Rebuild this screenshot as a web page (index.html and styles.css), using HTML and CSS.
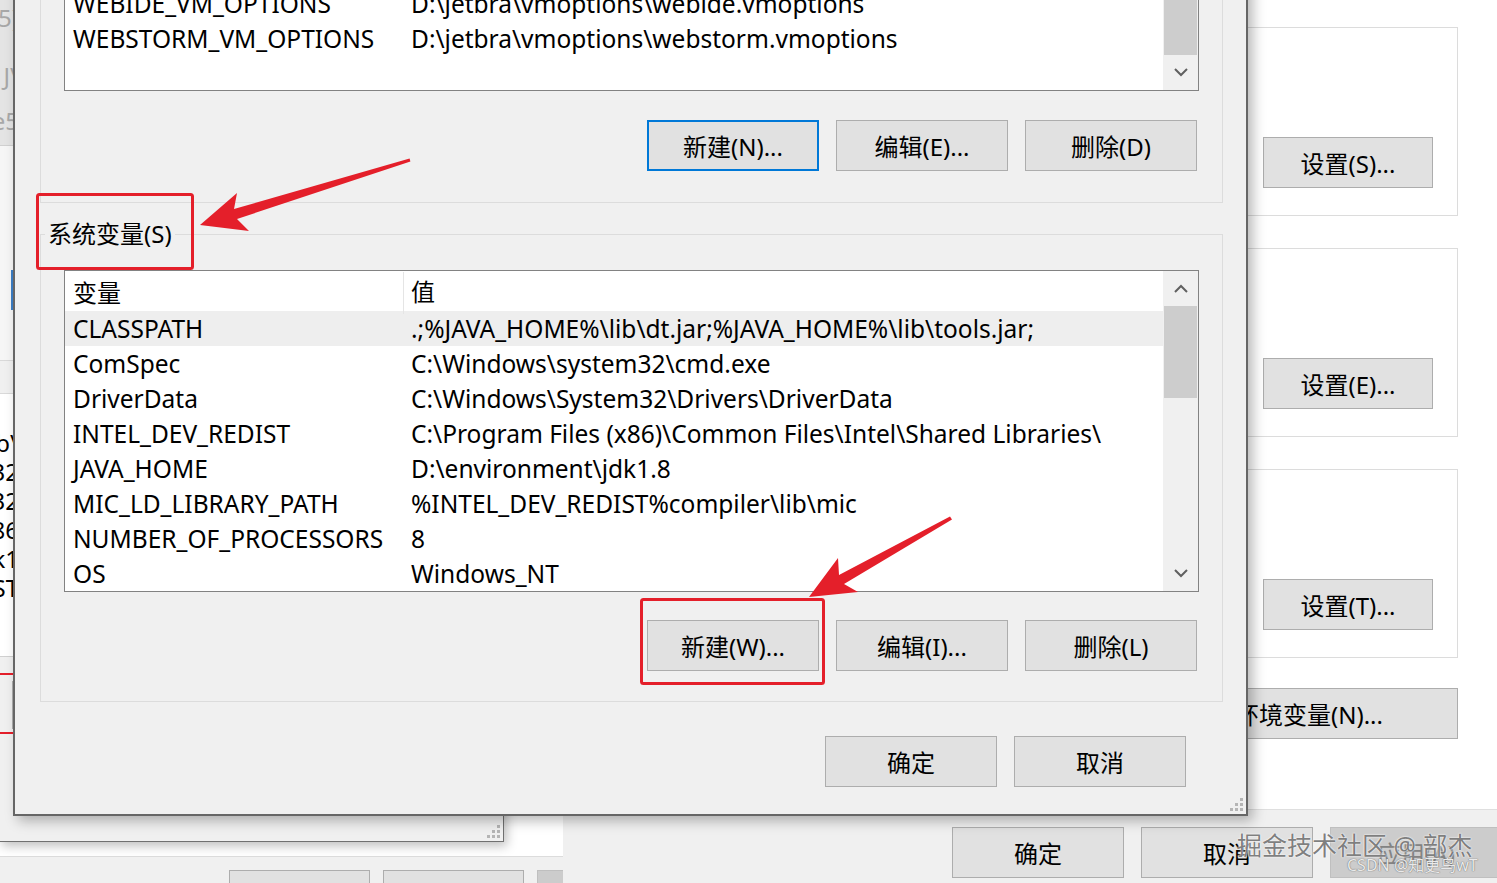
FILE: index.html
```html
<!DOCTYPE html>
<html lang="zh-CN">
<head>
  <meta charset="UTF-8" />
  <title>编辑环境变量</title>
  <link rel="stylesheet" href="styles.css">
</head>
<body>

<div class="desk">

  <!-- window far behind, left -->
  <div class="win win-left">
    <div class="left-body"></div>
    <div class="left-bar">
      <span class="btn btn-sm"></span>
      <span class="btn btn-sm"></span>
      <span class="btn btn-sm off"></span>
    </div>
  </div>

  <!-- 系统属性 -->
  <div class="win win-sys">
    <div class="sys-body">
      <div class="sys-group"><span class="btn btn-sys">设置(S)...</span></div>
      <div class="sys-group"><span class="btn btn-sys">设置(E)...</span></div>
      <div class="sys-group"><span class="btn btn-sys">设置(T)...</span></div>
      <span class="btn btn-wide">环境变量(N)...</span>
    </div>
    <div class="sys-bar">
      <span class="btn">确定</span>
      <span class="btn">取消</span>
      <span class="btn off">应用(A)</span>
    </div>
  </div>

  <!-- 环境变量 -->
  <div class="win win-env">
    <div class="env-strip">
      <div class="es-top">
        <div class="frag" style="height:72px">25)</div>
        <div class="frag" style="height:44px">J\</div>
        <div class="frag" style="height:46px">Ie5</div>
      </div>
      <div class="es-mid"><span class="es-blue"></span></div>
      <div class="es-bar"></div>
      <div class="es-list">
        <div class="frag">lib\</div>
        <div class="frag">m32</div>
        <div class="frag">m32</div>
        <div class="frag">x86</div>
        <div class="frag">jdk1</div>
        <div class="frag">IST</div>
      </div>
      <div class="es-foot">
        <div class="es-red"><span class="es-edge"></span></div>
      </div>
    </div>
    <svg class="grip" width="13" height="13" viewBox="0 0 13 13"><rect x="10" y="0" width="3" height="3"/><rect x="5" y="5" width="3" height="3"/><rect x="10" y="5" width="3" height="3"/><rect x="0" y="10" width="3" height="3"/><rect x="5" y="10" width="3" height="3"/><rect x="10" y="10" width="3" height="3"/></svg>
  </div>

  <!-- 编辑环境变量 dialog -->
  <div class="win dialog">
    <div class="group">
      <div class="list list-user">
        <div class="list-rows">
          <div class="row"><span>USERDOMAIN_ROAMINGPROFILE</span><span>DESKTOP</span></div>
          <div class="row"><span>WEBIDE_VM_OPTIONS</span><span>D:\jetbra\vmoptions\webide.vmoptions</span></div>
          <div class="row"><span>WEBSTORM_VM_OPTIONS</span><span>D:\jetbra\vmoptions\webstorm.vmoptions</span></div>
        </div>
        <div class="scroll">
          <div class="sb-btn"><svg width="14" height="9" viewBox="0 0 14 9"><polyline points="1,8 7,2 13,8"/></svg></div>
          <div class="sb-thumb"></div>
          <div class="sb-track"></div>
          <div class="sb-btn"><svg width="14" height="9" viewBox="0 0 14 9"><polyline points="1,1 7,7 13,1"/></svg></div>
        </div>
      </div>
      <div class="btn-row">
        <span class="btn focus">新建(N)...</span>
        <span class="btn">编辑(E)...</span>
        <span class="btn">删除(D)</span>
      </div>
    </div>

    <fieldset class="group group-sys">
      <legend>系统变量(S)</legend>
      <div class="list list-sys">
        <div class="list-rows">
          <div class="row head"><span>变量</span><span>值</span></div>
          <div class="row sel"><span>CLASSPATH</span><span>.;%JAVA_HOME%\lib\dt.jar;%JAVA_HOME%\lib\tools.jar;</span></div>
          <div class="row"><span>ComSpec</span><span>C:\Windows\system32\cmd.exe</span></div>
          <div class="row"><span>DriverData</span><span>C:\Windows\System32\Drivers\DriverData</span></div>
          <div class="row"><span>INTEL_DEV_REDIST</span><span>C:\Program Files (x86)\Common Files\Intel\Shared Libraries\</span></div>
          <div class="row"><span>JAVA_HOME</span><span>D:\environment\jdk1.8</span></div>
          <div class="row"><span>MIC_LD_LIBRARY_PATH</span><span>%INTEL_DEV_REDIST%compiler\lib\mic</span></div>
          <div class="row"><span>NUMBER_OF_PROCESSORS</span><span>8</span></div>
          <div class="row"><span>OS</span><span>Windows_NT</span></div>
        </div>
        <div class="scroll">
          <div class="sb-btn"><svg width="14" height="9" viewBox="0 0 14 9"><polyline points="1,8 7,2 13,8"/></svg></div>
          <div class="sb-thumb"></div>
          <div class="sb-track"></div>
          <div class="sb-btn"><svg width="14" height="9" viewBox="0 0 14 9"><polyline points="1,1 7,7 13,1"/></svg></div>
        </div>
      </div>
      <div class="btn-row">
        <span class="btn">新建(W)...</span>
        <span class="btn">编辑(I)...</span>
        <span class="btn">删除(L)</span>
      </div>
    </fieldset>

    <div class="dlg-actions">
      <span class="btn">确定</span>
      <span class="btn">取消</span>
    </div>

    <svg class="grip" width="13" height="13" viewBox="0 0 13 13"><rect x="10" y="0" width="3" height="3"/><rect x="5" y="5" width="3" height="3"/><rect x="10" y="5" width="3" height="3"/><rect x="0" y="10" width="3" height="3"/><rect x="5" y="10" width="3" height="3"/><rect x="10" y="10" width="3" height="3"/></svg>
  </div>

  <!-- red annotations -->
  <svg class="marks" width="1497" height="883" viewBox="0 0 1497 883">
    <rect x="37.5" y="194.5" width="155" height="74" rx="2"/>
    <rect x="641.5" y="599.5" width="182" height="84" rx="2"/>
    <polygon points="200,225 237,193 234,209 409.6,158.6 410.4,161.4 237,219 249,231"/>
    <polygon points="809,597 838,558 839,575 950,516.5 952,519.5 844,584 858,592"/>
  </svg>

  <div class="wm">掘金技术社区 @ 部杰</div>
  <div class="wm-csdn">CSDN @知更鸟wT</div>
</div>

</body>
</html>
```

FILE: styles.css
```css
* {
  box-sizing: border-box;
}
body {
  margin: 0;
  width: 1497px;
  height: 883px;
  overflow: hidden;
  background: #f0f0f0;
  font-family: "Noto Sans", "Noto Sans CJK SC", sans-serif;
  font-size: 24px;
  color: #000;
}

.desk {
  position: relative;
  width: 1497px;
  height: 883px;
  overflow: hidden;
}
.win {
  position: absolute;
}

.btn {
  width: 172px;
  height: 51px;
  flex: none;
  display: flex;
  align-items: center;
  justify-content: center;
  background: #e1e1e1;
  border: 1px solid #adadad;
  white-space: nowrap;
}
.btn.focus {
  border: 2px solid #0078d7;
}
.btn.off {
  background: #cccccc;
  border-color: #bfbfbf;
  color: #838383;
}

/* left window */
.win-left {
  left: 0;
  top: 0;
  width: 564px;
  height: 883px;
  background: #fff;
  border-right: 1px solid #a0a0a0;
  display: flex;
  flex-direction: column;
}
.left-body {
  flex: 1;
}
.left-bar {
  height: 27px;
  background: #f0f0f0;
  border-top: 1px solid #dcdcdc;
  display: flex;
  gap: 13px;
  padding: 13px 0 0 229px;
  overflow: hidden;
}
.btn-sm {
  width: 141px;
}

/* system properties */
.win-sys {
  left: 563px;
  top: 0;
  right: 0;
  bottom: 0;
  background: #fff;
  display: flex;
  flex-direction: column;
}
.sys-body {
  height: 809px;
  padding: 27px 39px 0 34px;
  display: flex;
  flex-direction: column;
}
.sys-group {
  height: 189px;
  border: 1px solid #dcdcdc;
  display: flex;
  justify-content: flex-end;
  align-items: flex-end;
  padding: 0 24px 27px 0;
}
.sys-group + .sys-group {
  margin-top: 32px;
}
.btn-sys {
  width: 170px;
}
.btn-wide {
  width: 298px;
  margin-top: 30px;
  align-self: flex-end;
}
.sys-bar {
  flex: 1;
  background: #f0f0f0;
  border-top: 1px solid #dfdfdf;
  display: flex;
  gap: 17px;
  padding: 17px 0 0 389px;
}

/* env window behind the dialog */
.win-env {
  left: -1px;
  top: -20px;
  width: 505px;
  height: 862px;
  background: #f0f0f0;
  border: 1px solid #707070;
  box-shadow: 3px 4px 10px rgba(0,0,0,0.25);
}
.env-strip {
  width: 19px;
  display: flex;
  flex-direction: column;
  overflow: hidden;
}
.frag {
  display: flex;
  justify-content: flex-end;
  align-items: center;
  white-space: nowrap;
  height: 29px;
}
.es-top {
  height: 164px;
  background: #e4e4e4;
  color: #a8a8a8;
}
.es-mid {
  height: 215px;
  background: #f6f6f6;
  border-top: 1px solid #d0d0d0;
  padding: 124px 0 0 11px;
}
.es-blue {
  display: block;
  width: 3px;
  height: 40px;
  background: #3c7fc7;
}
.es-bar {
  height: 34px;
  border-top: 1px solid #d9d9d9;
  border-bottom: 1px solid #d9d9d9;
}
.es-list {
  height: 262px;
  background: #fff;
  padding-top: 34px;
}
.es-foot {
  border-top: 1px solid #d0d0d0;
  padding-top: 16px;
}
.es-red {
  height: 61px;
  border-top: 2px solid #e41f2a;
  border-bottom: 2px solid #e41f2a;
  padding: 6px 0 0 12px;
}
.es-edge {
  display: block;
  height: 48px;
  border-left: 1px solid #adadad;
}

.grip {
  position: absolute;
  right: 3px;
  bottom: 3px;
  fill: #b5b5b5;
}

/* main dialog */
.dialog {
  left: 13px;
  top: -60px;
  width: 1235px;
  height: 876px;
  background: #f0f0f0;
  border: 2px solid #666;
  box-shadow: 5px 5px 12px rgba(0,0,0,0.28);
  padding: 0 23px 0 25px;
}
.group {
  border: 1px solid #dcdcdc;
  padding: 7px 23px 31px;
}
.group-sys {
  margin: 16px 0 0;
  padding: 21px 23px 30px;
  min-width: 0;
}
.group-sys legend {
  padding: 0 3px;
  margin-left: -19px;
  line-height: 30px;
}

.list {
  display: flex;
  background: #fff;
  border: 1px solid #828282;
}
.list-user {
  height: 141px;
}
.list-sys {
  height: 322px;
}
.list-rows {
  flex: 1;
  overflow: hidden;
}
.row {
  display: grid;
  grid-template-columns: 339px 1fr;
  height: 35px;
  line-height: 35px;
  font-size: 24.5px;
  white-space: nowrap;
}
.row span:first-child {
  padding-left: 8px;
}
.row span + span {
  padding-left: 7px;
}
.row.head {
  height: 40px;
  line-height: 42px;
  font-size: 24px;
}
.row.head span:first-child {
  border-right: 1px solid #e5e5e5;
  margin: 1px 0;
}
.row.sel {
  background: #eeeeee;
}

.scroll {
  width: 35px;
  background: #f0f0f0;
  display: flex;
  flex-direction: column;
}
.sb-btn {
  height: 35px;
  flex: none;
  display: flex;
  align-items: center;
  justify-content: center;
}
.sb-btn svg {
  fill: none;
  stroke: #606060;
  stroke-width: 2;
}
.sb-thumb {
  margin: 0 1px;
  background: #cdcdcd;
  flex: none;
}
.list-user .sb-thumb {
  height: 69px;
}
.list-sys .sb-thumb {
  height: 92px;
}
.sb-track {
  flex: 1;
}

.btn-row {
  display: flex;
  justify-content: flex-end;
  gap: 17px;
  margin-top: 29px;
  padding-right: 2px;
}
.group-sys .btn-row {
  margin-top: 28px;
}
.dlg-actions {
  display: flex;
  justify-content: flex-end;
  gap: 17px;
  margin-top: 34px;
  padding-right: 37px;
}

/* annotations */
.marks {
  position: absolute;
  left: 0;
  top: 0;
  pointer-events: none;
}
.marks rect {
  fill: none;
  stroke: #e41f2a;
  stroke-width: 3;
}
.marks polygon {
  fill: #e41f2a;
}

.wm {
  position: absolute;
  left: 1237px;
  top: 826px;
  font-size: 25px;
  white-space: nowrap;
  color: rgba(70,70,70,0.7);
  text-shadow: 0 0 2px #fff, 0 0 1px #fff;
}
.wm-csdn {
  position: absolute;
  left: 1347px;
  top: 852px;
  font-size: 16px;
  white-space: nowrap;
  color: rgba(255,255,255,0.85);
  text-shadow: 0 0 1px #777, 0 0 1px #777;
}
```
